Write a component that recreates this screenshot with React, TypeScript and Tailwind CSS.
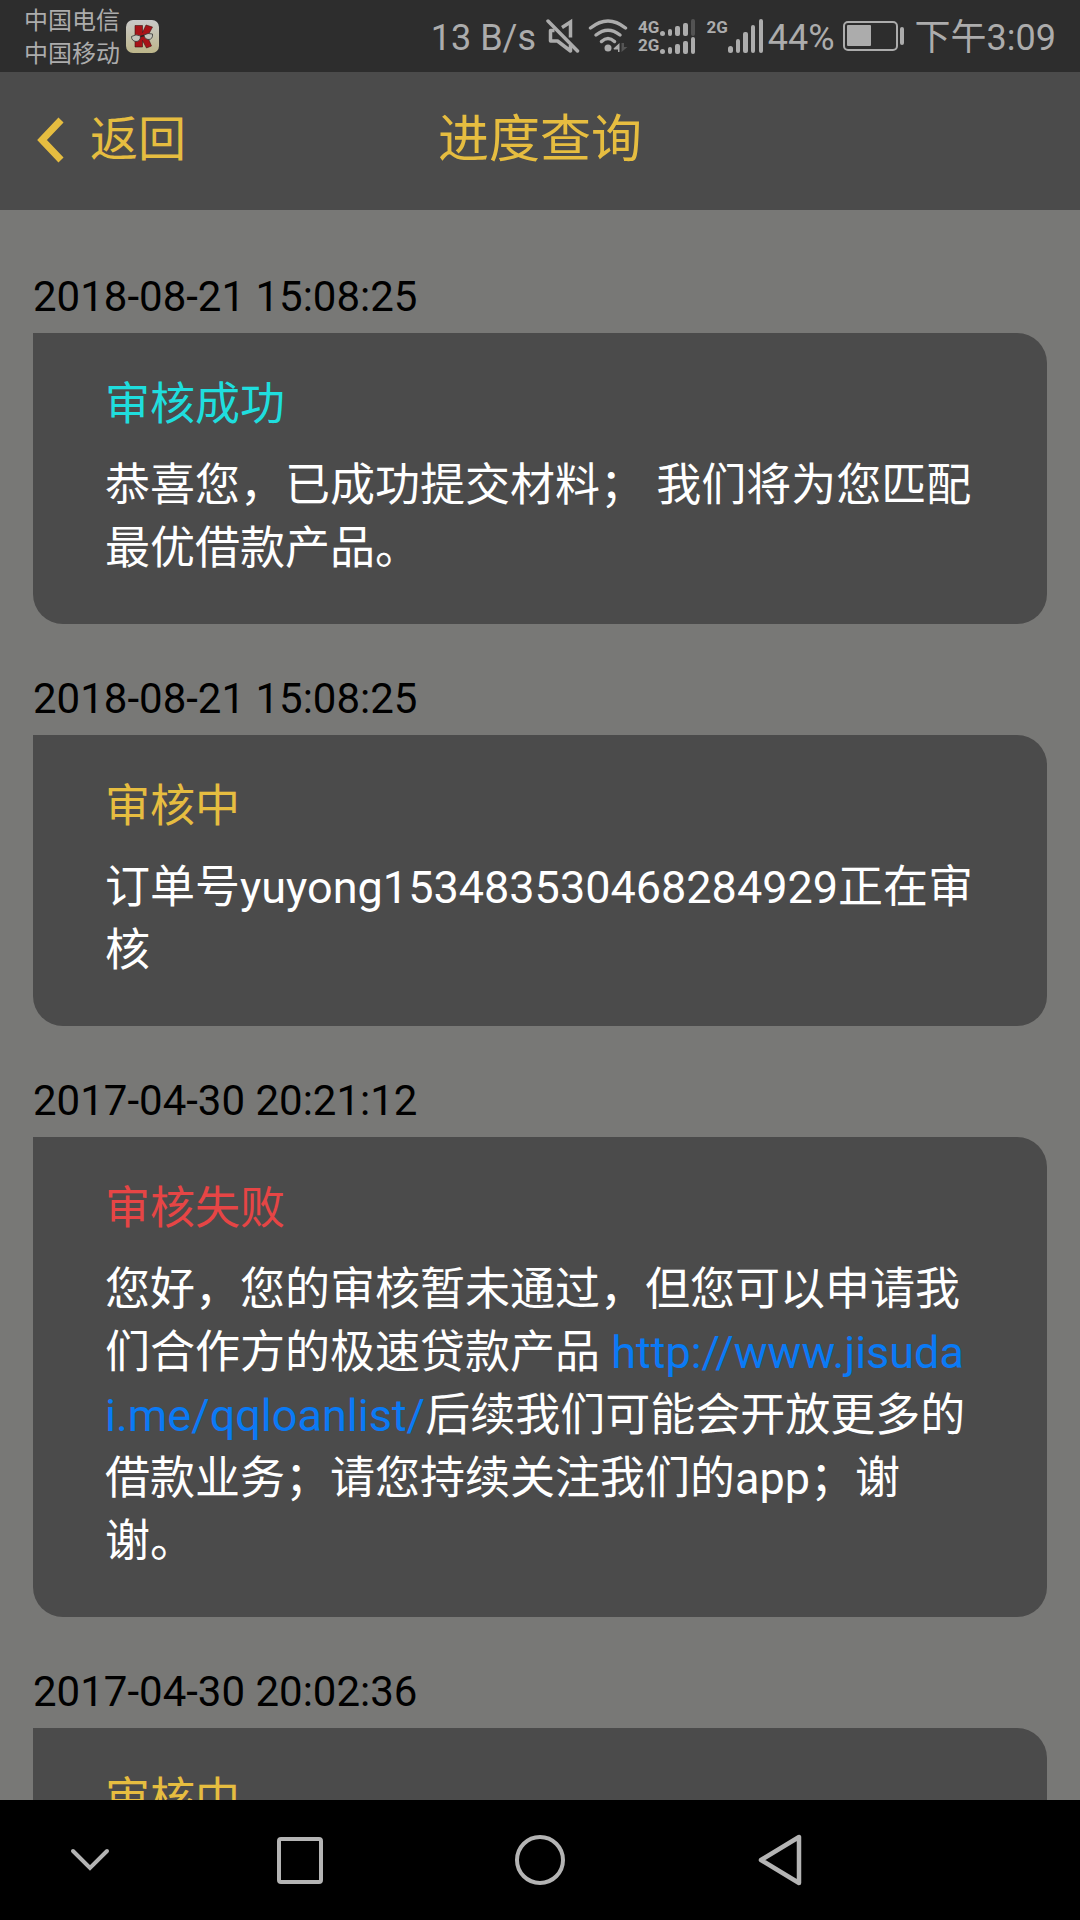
import type { ReactNode } from "react";

type Status = "success" | "pending" | "failed";

type Progress = {
  time: string;
  status: Status;
  title: string;
  message?: ReactNode;
};

const statusColor: Record<Status, string> = {
  success: "text-[#1fdede]",
  pending: "text-[#e6bd40]",
  failed: "text-[#e64545]",
};

const records: Progress[] = [
  {
    time: "2018-08-21 15:08:25",
    status: "success",
    title: "审核成功",
    message: "恭喜您，已成功提交材料； 我们将为您匹配最优借款产品。",
  },
  {
    time: "2018-08-21 15:08:25",
    status: "pending",
    title: "审核中",
    message: "订单号yuyong153483530468284929正在审核",
  },
  {
    time: "2017-04-30 20:21:12",
    status: "failed",
    title: "审核失败",
    message: (
      <>
        您好，您的审核暂未通过，但您可以申请我们合作方的极速贷款产品{" "}
        <a href="http://www.jisudai.me/qqloanlist/" className="text-[#0a7af5]">
          http://www.jisudai.me/qqloanlist/
        </a>
        后续我们可能会开放更多的借款业务；请您持续关注我们的app；谢谢。
      </>
    ),
  },
  {
    time: "2017-04-30 20:02:36",
    status: "pending",
    title: "审核中",
  },
];

const AppBadge = () => (
  <svg width="33" height="33" viewBox="0 0 33 33" aria-hidden="true">
    <defs>
      <linearGradient id="badge" x1="0" y1="0" x2="0" y2="1">
        <stop offset="0" stopColor="#c9c9c9" />
        <stop offset="1" stopColor="#bdb68a" />
      </linearGradient>
    </defs>
    <rect width="33" height="33" rx="7" fill="url(#badge)" />
    <path d="M9 5.500h7.500v7L20 5l6.500 2-5 9.500L25.500 26l-5 2-4-7.500V27H9z" fill="#a81218" stroke="#3a1414" strokeWidth="0.6" />
    <path d="M5.500 16.500Q10 13.500 14.500 16Q14.500 21.500 10 21.500Q5.500 21 5.500 16.500z" fill="#c4c4bc" stroke="#333" strokeWidth="0.8" />
    <path d="M18 15Q22 12.500 26.500 14Q27 19 23 19.500Q18.500 19.500 18 15z" fill="#c4c4bc" stroke="#333" strokeWidth="0.8" />
    <path d="M14.500 16.500L18 15.500" stroke="#222" strokeWidth="1.400" fill="none" />
  </svg>
);

const MuteIcon = () => (
  <svg width="34" height="36" viewBox="0 0 34 36" fill="none" stroke="currentColor" strokeWidth="3.500" aria-hidden="true">
    <path d="M16 9.500L24.500 4V19.500" />
    <path d="M8.500 12.500H4.500V23H11.500L24.500 33V27" strokeLinejoin="round" />
    <path d="M2 3L31.500 33" strokeLinecap="round" />
  </svg>
);

const WifiIcon = () => (
  <svg width="40" height="36" viewBox="0 0 40 36" fill="none" stroke="currentColor" strokeLinecap="round" aria-hidden="true">
    <path d="M2.500 10Q20 -4 37.500 10" strokeWidth="3.500" />
    <path d="M8 17Q20 7.500 32 17" strokeWidth="3.500" />
    <path d="M13.500 23.500Q20 17.500 26.500 23.500" strokeWidth="3.500" />
    <circle cx="20" cy="30" r="3.500" fill="currentColor" stroke="none" />
    <path d="M25.500 30.500L31.500 25V34H30V31.500H26z" fill="currentColor" stroke="none" />
    <path d="M33.500 25V34L39.500 29H36V25z" fill="#555" stroke="none" />
  </svg>
);

const SmallBars = ({ dimLast = false }: { dimLast?: boolean }) => (
  <svg width="36" height="17" viewBox="0 0 36 17" fill="currentColor" aria-hidden="true">
    <rect x="0" y="12" width="5" height="5" rx="2.500" />
    <rect x="8" y="10" width="4" height="7" rx="2" />
    <rect x="15" y="7" width="5" height="10" rx="2" />
    <rect x="23" y="4" width="5" height="13" rx="2" />
    <rect x="31" y="0" width="4" height="17" rx="2" opacity={dimLast ? 0.3 : 1} />
  </svg>
);

const LargeBars = () => (
  <svg width="36" height="34" viewBox="0 0 36 34" fill="currentColor" aria-hidden="true">
    <rect x="0" y="27" width="5" height="7" rx="2.500" />
    <rect x="8" y="20" width="4" height="14" rx="2" />
    <rect x="15" y="13" width="5" height="21" rx="2" />
    <rect x="23" y="6" width="4" height="28" rx="2" />
    <rect x="31" y="0" width="4" height="34" rx="2" />
  </svg>
);

const BatteryIcon = () => (
  <svg width="62" height="30" viewBox="0 0 62 30" aria-hidden="true">
    <rect x="1" y="1" width="53" height="28" rx="4" fill="none" stroke="currentColor" strokeWidth="2" />
    <rect x="4" y="4" width="24" height="21" rx="1" fill="currentColor" />
    <rect x="57" y="6" width="4" height="18" rx="2" fill="currentColor" />
  </svg>
);

const NetworkLabel = ({ children }: { children: ReactNode }) => (
  <span className="font-['Liberation_Sans_Narrow',Roboto,sans-serif] text-[17px] leading-[17px] font-bold">
    {children}
  </span>
);

const StatusBar = () => (
  <div className="flex h-[72px] shrink-0 items-center justify-between bg-[#2d2d2d] px-6 text-[#acacac]">
    <div className="flex items-center gap-1.5">
      <div className="pt-1 text-[24px] leading-[33px]">
        <p>中国电信</p>
        <p>中国移动</p>
      </div>
      <AppBadge />
    </div>
    <div className="flex items-center text-[36px] leading-[40px]">
      <span className="mr-2.5 pt-1">13 B/s</span>
      <MuteIcon />
      <span className="mr-2.5 ml-2">
        <WifiIcon />
      </span>
      <div className="mr-2.5 flex flex-col gap-px">
        <div className="flex items-center gap-px">
          <NetworkLabel>4G</NetworkLabel>
          <SmallBars dimLast />
        </div>
        <div className="flex items-center gap-px">
          <NetworkLabel>2G</NetworkLabel>
          <SmallBars />
        </div>
      </div>
      <div className="mr-1 flex items-start">
        <NetworkLabel>2G</NetworkLabel>
        <LargeBars />
      </div>
      <span className="mr-2 pt-1">44%</span>
      <BatteryIcon />
      <span className="ml-2.5 pt-1">下午3:09</span>
    </div>
  </div>
);

const Header = () => (
  <header className="grid h-[138px] shrink-0 grid-cols-[1fr_auto_1fr] items-center bg-[#4b4b4b] pb-0.5 text-[#e6bd40]">
    <button type="button" className="flex items-center gap-6 justify-self-start pl-9 text-[48px] leading-[60px]">
      <svg width="30" height="46" viewBox="0 0 30 46" fill="none" stroke="currentColor" strokeWidth="7" aria-hidden="true">
        <path d="M25 3L6 23L25 43" />
      </svg>
      返回
    </button>
    <h1 className="text-[51px] leading-[60px]">进度查询</h1>
  </header>
);

const ProgressCard = ({ time, status, title, message }: Progress) => (
  <article>
    <time className="block text-[42px] leading-[72px] text-black">{time}</time>
    <div className="rounded-[30px] rounded-tl-none bg-[#4b4b4b] px-[72px] pt-10 pb-11 text-[45px] leading-[63px]">
      <h2 className={statusColor[status]}>{title}</h2>
      {message && <p className="mt-[18px] break-all text-white">{message}</p>}
    </div>
  </article>
);

const NavBar = () => (
  <nav className="grid h-[120px] shrink-0 grid-cols-[3fr_4fr_4fr_4fr_3fr] bg-black text-[#b4b4b4]">
    <button type="button" aria-label="收起" className="flex items-center justify-center">
      <svg width="40" height="24" viewBox="0 0 40 24" fill="none" stroke="currentColor" strokeWidth="4" strokeLinecap="round">
        <path d="M3 3L20 20L37 3" />
      </svg>
    </button>
    <button type="button" aria-label="最近任务" className="flex items-center justify-center">
      <svg width="46" height="48" viewBox="0 0 46 48" fill="none" stroke="currentColor" strokeWidth="4">
        <rect x="2" y="3" width="42" height="43" rx="2" />
      </svg>
    </button>
    <button type="button" aria-label="主页" className="flex items-center justify-center">
      <svg width="52" height="52" viewBox="0 0 52 52" fill="none" stroke="currentColor" strokeWidth="4">
        <circle cx="26" cy="26" r="23" />
      </svg>
    </button>
    <button type="button" aria-label="后退" className="flex items-center justify-center">
      <svg width="44" height="52" viewBox="0 0 44 52" fill="none" stroke="currentColor" strokeWidth="4.500" strokeLinejoin="round">
        <path d="M41 3V49L3 26z" />
      </svg>
    </button>
  </nav>
);

export default function App() {
  return (
    <div className="flex h-screen flex-col overflow-hidden bg-[#787876] font-[Roboto,'Noto_Sans_CJK_SC',sans-serif]">
      <StatusBar />
      <Header />
      <main className="flex min-h-0 flex-1 flex-col gap-[39px] overflow-hidden px-[33px] pt-[51px]">
        {records.map((record, index) => (
          <ProgressCard key={index} {...record} />
        ))}
      </main>
      <NavBar />
    </div>
  );
}
